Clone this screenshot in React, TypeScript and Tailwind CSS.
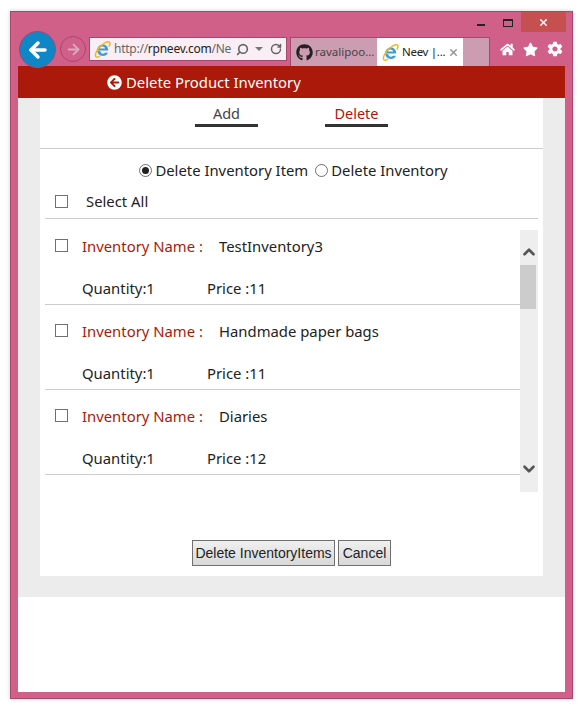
import { FaArrowCircleLeft, FaGithub, FaHome, FaStar } from "react-icons/fa"
import { IoMdSettings } from "react-icons/io"
import { ArrowLeft, ArrowRight, ChevronDown, ChevronUp, RotateCw, Search, X } from "lucide-react"

const items = [
  { name: "TestInventory3", price: "11" },
  { name: "Handmade paper bags", price: "11" },
  { name: "Diaries", price: "12" },
]

function IeLogo({ size = 17 }: { size?: number }) {
  return (
    <svg width={size} height={size} viewBox="0 0 20 20" className="shrink-0">
      <path d="M3.200 11.200h13.400c.4-4.200-2.400-7.100-6.100-7.100-3.900 0-6.700 3-6.700 6.800 0 3.800 2.800 6.600 6.600 6.600 2.800 0 5-1.300 6-3.800h-3.600c-.6.800-1.300 1.200-2.300 1.200-1.700 0-2.900-1.100-3-2.700M6.900 8.800c.2-1.400 1.500-2.300 3.100-2.300s2.900.9 3 2.300z" fill="#3f9bd8" fillRule="evenodd" />
      <path d="M2.300 18.500C.3 16.500 3.500 9.500 9 5c4-3.300 8-4.800 9.300-3.500 1 1 .5 2.800-.8 5M2.300 18.500c1 .9 2.800.6 4.700-.6" fill="none" stroke="#f2b81c" strokeWidth="1.800" />
    </svg>
  )
}

function Checkbox() {
  return <span className="block h-[13px] w-[13px] shrink-0 border border-[#707070] bg-white" />
}

function Radio({ checked }: { checked?: boolean }) {
  return (
    <span className="flex h-[13px] w-[13px] shrink-0 items-center justify-center rounded-full border border-[#707070] bg-white">
      {checked && <span className="h-[7px] w-[7px] rounded-full bg-[#222]" />}
    </span>
  )
}

export default function App() {
  return (
    <div className="h-[706px] w-[580px] overflow-hidden bg-white pl-[10px] pt-[11px] font-['Noto_Sans',sans-serif] text-[14.85px] text-[#222]">
      <div className="flex h-[688px] w-[563px] flex-col border border-[#a5486f] bg-[#d16088] px-[7px] pb-[6px] shadow-[0_0_4px_rgba(0,0,0,0.2)]">
        {/* Window caption */}
        <div className="flex h-[20px] shrink-0 items-start justify-end">
          <div className="mr-[18px] mt-[12px] h-[2px] w-[8px] bg-[#222]" />
          <div className="mr-[8px] mt-[7px] h-[8px] w-[10px] border border-t-2 border-[#222]" />
          <div className="-mr-px flex h-[20px] w-[45px] items-center justify-center bg-[#c6504f]">
            <X size={11} strokeWidth={3} className="text-white" />
          </div>
        </div>

        {/* Browser toolbar */}
        <div className="relative z-10 flex h-[34px] shrink-0 items-start">
          <div className="z-10 ml-[1px] -mt-[1px] flex h-[37px] w-[37px] shrink-0 items-center justify-center rounded-full border border-[#a5486f] bg-[#0f86c6]">
            <ArrowLeft size={24} strokeWidth={3.500} className="text-white" />
          </div>
          <div className="ml-[4px] mt-[4px] flex h-[26px] w-[26px] shrink-0 items-center justify-center rounded-full border border-[#a5486f]">
            <ArrowRight size={17} strokeWidth={2.500} className="text-[#dfa8bf]" />
          </div>
          <div className="ml-[3px] mt-[5px] flex h-[24px] w-[198px] shrink-0 items-center border border-[#a5486f] bg-[#f9eef3] pl-[4px] text-[12px] tracking-[-0.25px]">
            <IeLogo />
            <span className="ml-[3px] w-[118px] overflow-hidden whitespace-nowrap text-[#666]">
              http://<span className="text-[#222]">rpneev.com</span>/Ne
            </span>
            <Search size={13} strokeWidth={3} className="ml-[4px] -scale-x-100 text-[#666]" />
            <span className="ml-[6px] h-0 w-0 border-x-[4px] border-t-[4px] border-x-transparent border-t-[#777]" />
            <RotateCw size={12} strokeWidth={3} className="ml-[7px] text-[#666]" />
          </div>
          <div className="ml-[3px] mt-[5px] flex h-[29px] shrink-0 border border-b-0 border-[#a5486f] bg-[#cc9cb1] text-[11.500px]">
            <div className="flex w-[86px] items-center overflow-hidden pl-[5px] text-[#444]">
              <FaGithub size={17} className="shrink-0 text-[#222]" />
              <span className="ml-[2px] whitespace-nowrap">ravalipoo...</span>
            </div>
            <div className="flex w-[86px] items-center bg-white pl-[5px]">
              <IeLogo />
              <span className="ml-[3px] whitespace-nowrap tracking-[-0.3px] text-[#222]">Neev |...</span>
              <X size={11} strokeWidth={3.500} className="ml-[3px] text-[#999]" />
            </div>
            <div className="w-[26px]" />
          </div>
          <div className="ml-[10px] mt-[8px] flex shrink-0 items-center gap-[8px] text-white">
            <FaHome size={15} />
            <FaStar size={15} />
            <IoMdSettings size={18} />
          </div>
        </div>

        {/* Page */}
        <div className="flex min-h-0 flex-1 flex-col bg-white">
          <div className="flex h-[32px] shrink-0 items-center bg-[#aa1909] pl-[89px] text-white">
            <FaArrowCircleLeft size={15} />
            <span className="ml-[4px]">Delete Product Inventory</span>
          </div>

          <div className="h-[499px] shrink-0 bg-[#ececec] px-[22px] pb-[21px]">
            <div className="flex h-full flex-col bg-white">
              {/* Add / Delete tabs */}
              <div className="flex h-[51px] shrink-0 justify-center gap-[67px] border-b border-[#ccc] pb-[21px] pt-[5px] text-[14.500px]">
                <div className="w-[63px] border-b-[3px] border-[#333] text-center leading-[21px] text-[#444]">Add</div>
                <div className="w-[63px] border-b-[3px] border-[#333] text-center leading-[21px] text-[#aa1909]">Delete</div>
              </div>

              <div className="flex h-[43px] shrink-0 items-center justify-center pl-[4px]">
                <Radio checked />
                <span className="ml-[3px] -mt-[1px]">Delete Inventory Item</span>
                <span className="ml-[7px]"><Radio /></span>
                <span className="ml-[3px] -mt-[1px]">Delete Inventory</span>
              </div>

              <div className="mx-[5px] flex h-[27px] shrink-0 items-start border-b border-[#ccc] pl-[10px] pt-[1px]">
                <span className="mt-[2px]"><Checkbox /></span>
                <span className="ml-[18px] -mt-[1px] leading-[18px]">Select All</span>
              </div>

              {/* Scrolling list */}
              <div className="ml-[5px] mt-[11px] flex h-[262px] w-[493px] shrink-0">
                <div className="min-w-0 flex-1">
                  {items.map((item, i) => (
                    <div key={item.name} className={`${i === 0 ? "h-[75px]" : "h-[85px]"} border-b border-[#ccc]`}>
                      <div className={`flex items-center pl-[10px] ${i === 0 ? "pt-[5px]" : "pt-[15px]"}`}>
                        <span className="-mt-[2px]"><Checkbox /></span>
                        <span className="ml-[14px] w-[137px] text-[#aa1909]">Inventory Name :</span>
                        <span>{item.name}</span>
                      </div>
                      <div className="mt-[20px] flex pl-[37px]">
                        <span className="w-[125px]">Quantity:1</span>
                        <span>Price :{item.price}</span>
                      </div>
                    </div>
                  ))}
                </div>
                <div className="relative flex w-[18px] shrink-0 flex-col items-center bg-[#eee] text-[#555]">
                  <ChevronUp size={18} strokeWidth={3.500} className="mt-[13px]" />
                  <div className="ml-[-2px] mt-[4px] h-[44px] w-[16px] bg-[#ccc]" />
                  <ChevronDown size={18} strokeWidth={3.500} className="mt-[151px]" />
                </div>
              </div>

              <div className="mt-[48px] flex justify-center gap-[3px] font-['Liberation_Sans',sans-serif] text-[14px] text-[#222]">
                <button className="h-[26px] w-[143px] whitespace-nowrap border border-[#707070] bg-gradient-to-b from-[#f0f0f0] to-[#d8d8d8]">Delete InventoryItems</button>
                <button className="h-[26px] w-[53px] border border-[#707070] bg-gradient-to-b from-[#f0f0f0] to-[#d8d8d8]">Cancel</button>
              </div>
            </div>
          </div>
        </div>
      </div>
    </div>
  )
}
